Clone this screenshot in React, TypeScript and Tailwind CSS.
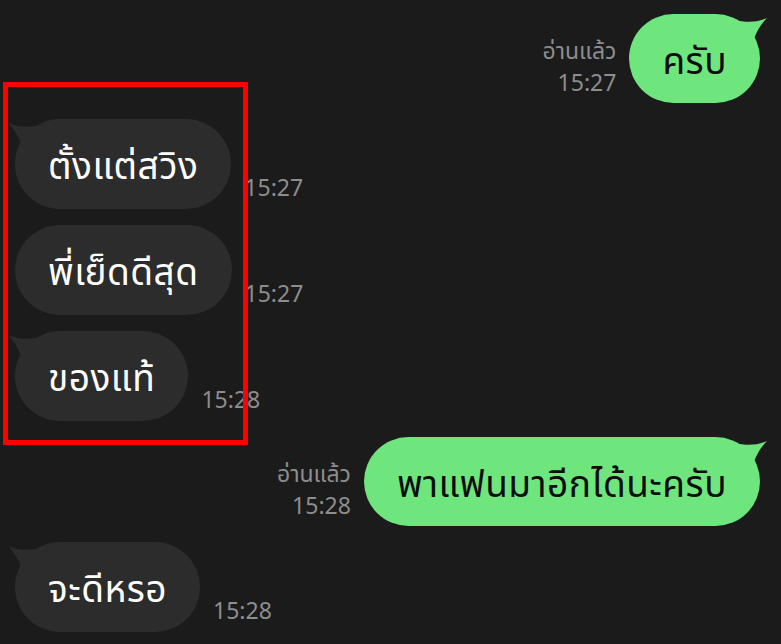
import React from "react";

const FONT = { fontFamily: '"Noto Sans Thai", "Noto Sans Thai Looped", "Noto Sans", "DejaVu Sans", sans-serif' };

function TailLeft({ color }: { color: string }) {
  return (
    <svg className="absolute left-[-8px] top-0" width="40" height="40" viewBox="0 0 40 40">
      <path d="M1 4 C 10 8, 20 9, 34 6 L 16 30 C 12 18, 7 10, 1 4 Z" fill={color} />
    </svg>
  );
}

function TailRight({ color }: { color: string }) {
  return (
    <svg className="absolute right-[-8px] top-0" width="40" height="40" viewBox="0 0 40 40">
      <path d="M39 4 C 30 8, 20 9, 6 6 L 24 30 C 28 18, 33 10, 39 4 Z" fill={color} />
    </svg>
  );
}

function Incoming({ text, time, tail }: { text: string; time: string; tail?: boolean }) {
  return (
    <div className="flex items-end gap-[13px]">
      <div className="relative">
        {tail && <TailLeft color="#2c2c2c" />}
        <div
          className="relative h-[90px] rounded-full bg-[#2c2c2c] px-[33px] pt-[10px] flex items-center text-[37px] tracking-[0.5px] text-white whitespace-nowrap"
          style={FONT}
        >
          {text}
        </div>
      </div>
      <div className="mb-[5px] text-[23px] leading-[29px] text-[#8d8d8d]" style={FONT}>
        {time}
      </div>
    </div>
  );
}

function Outgoing({ text, time }: { text: string; time: string }) {
  return (
    <div className="flex items-end justify-end gap-[13px]">
      <div className="mb-[4px] flex flex-col items-end gap-[3px] text-[23px] text-[#8d8d8d]" style={FONT}>
        <span className="leading-[29px]">อ่านแล้ว</span>
        <span className="leading-[29px]">{time}</span>
      </div>
      <div className="relative">
        <TailRight color="#6fe57e" />
        <div
          className="relative h-[89px] rounded-full bg-[#6fe57e] px-[33px] pt-[10px] flex items-center text-[37px] tracking-[0.5px] text-[#0d0d0d] whitespace-nowrap"
          style={FONT}
        >
          {text}
        </div>
      </div>
    </div>
  );
}

export default function App() {
  return (
    <div className="relative w-[781px] h-[644px] overflow-hidden bg-[#1b1b1b]">
      <div className="flex flex-col gap-[16px] pl-[15px] pr-[21px] pt-[14px]">
        <Outgoing text="ครับ" time="15:27" />
        <Incoming text="ตั้งแต่สวิง" time="15:27" tail />
        <Incoming text="พี่เย็ดดีสุด" time="15:27" />
        <Incoming text="ของแท้" time="15:28" tail />
        <Outgoing text="พาแฟนมาอีกได้นะครับ" time="15:28" />
        <Incoming text="จะดีหรอ" time="15:28" tail />
      </div>
      <div className="absolute left-[3px] top-[82px] w-[245px] h-[363px] border-[5px] border-[#ff0000]" />
    </div>
  );
}
